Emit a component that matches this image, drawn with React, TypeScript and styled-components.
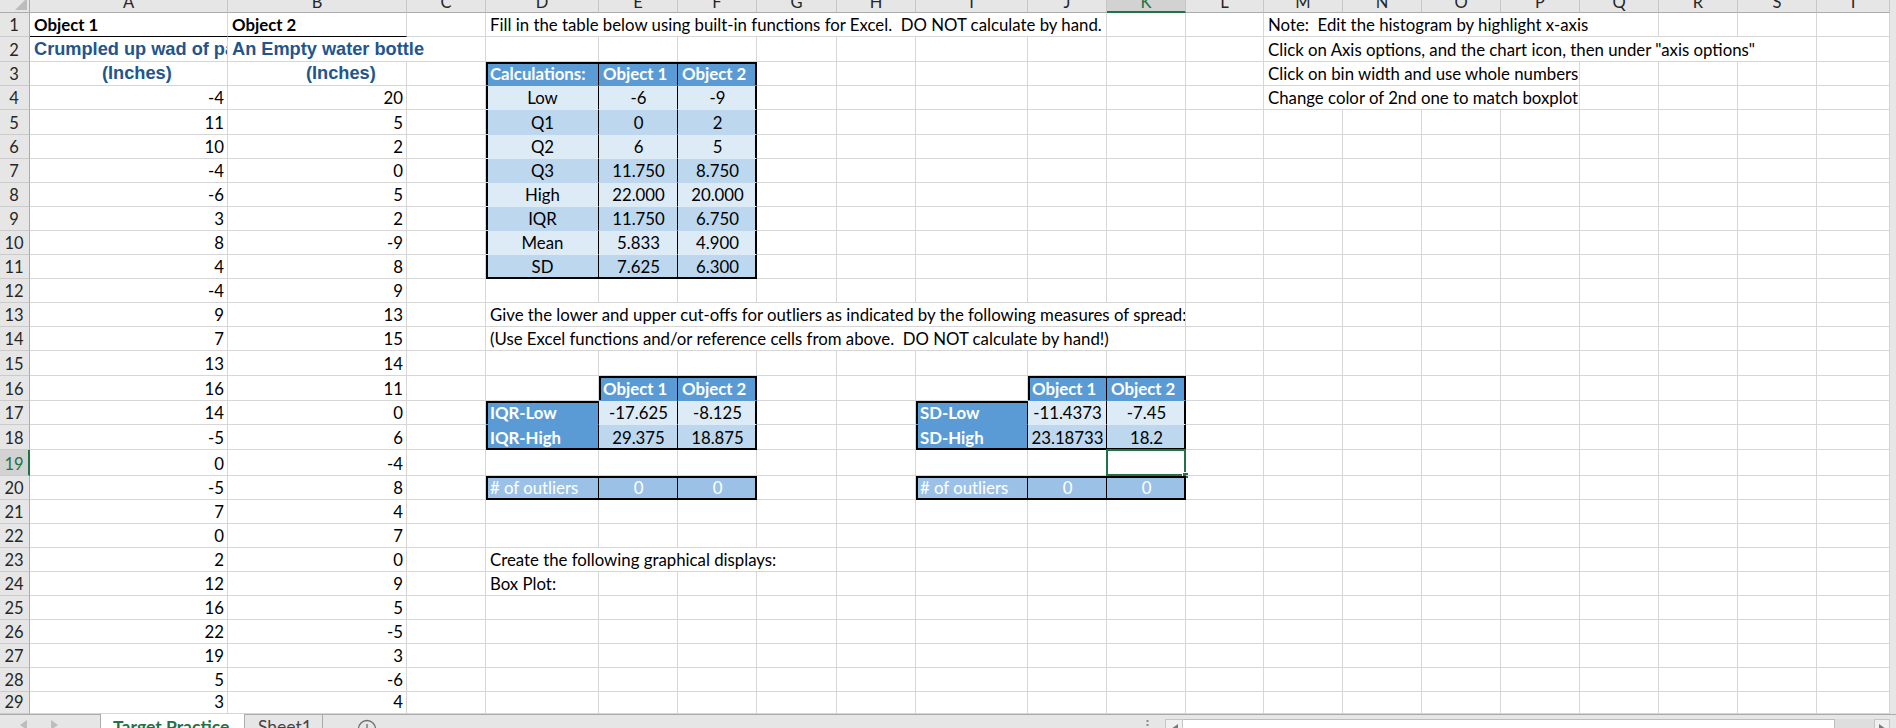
import React from 'react';
import styled, { createGlobalStyle } from 'styled-components';

const FONT = `Lato, "Open Sans", sans-serif`;
const TITLE_FONT = `"Liberation Sans", Arial, sans-serif`;
const GRID = '#d6d6d6';
const HEAD_BG = '#e6e6e6';
const HEAD_SEL = '#d2d2d2';
const HEAD_EDGE = '#ababab';
const GREEN = '#217346';
const BODY_SIZE = 16.8;

const GlobalStyle = createGlobalStyle`
  html, body { margin: 0; padding: 0; }
  body { background: #e6e6e6; font-family: ${FONT}; }
`;

const COLS = ['A','B','C','D','E','F','G','H','I','J','K','L','M','N','O','P','Q','R','S','T'];
const WIDTHS = [198,179,79,113,79,79,80,79,112,79,79,78,79,79,79,79,79,79,79,73];
const HEIGHTS = [24,25,24,24,25,24,24,24,24,24,24,24,24,24,25,25,24,25,26,24,24,24,24,24,24,24,24,24,22];
const SEL_COL = 'K';
const SEL_ROW = 19;

type Tone = 'head' | 'light' | 'dark' | 'outlier';
const TONE_BG: Record<Tone, string> = {
  head: '#5b9bd5',
  light: '#ddebf7',
  dark: '#bdd7ee',
  outlier: '#9bc2e6',
};

interface Spec {
  text?: string;
  span?: number;
  align?: 'left' | 'center' | 'right';
  tone?: Tone;
  bold?: boolean;
  title?: boolean;
  indent?: number;
  t?: number;
  l?: number;
  r?: number;
  b?: number;
  sel?: boolean;
}

const rows: Record<string, Spec>[] = HEIGHTS.map(() => ({}));
const put = (row: number, col: string, spec: Spec) => {
  rows[row - 1][col] = spec;
};

/* ---------- sheet content ---------- */
put(1, 'A', { text: 'Object 1', bold: true, b: 1 });
put(1, 'B', { text: 'Object 2', bold: true, b: 1 });
put(1, 'D', { text: 'Fill in the table below using built-in functions for Excel.  DO NOT calculate by hand.', span: 7 });
put(1, 'M', { text: 'Note:  Edit the histogram by highlight x-axis', span: 5 });
put(2, 'A', { text: 'Crumpled up wad of paper', title: true });
put(2, 'B', { text: 'An Empty water bottle', title: true, span: 2 });
put(2, 'M', { text: 'Click on Axis options, and the chart icon, then under "axis options"', span: 7 });
put(3, 'A', { text: '(Inches)', title: true, indent: 72 });
put(3, 'B', { text: '(Inches)', title: true, indent: 78 });
put(3, 'M', { text: 'Click on bin width and use whole numbers', span: 4 });
put(4, 'M', { text: 'Change color of 2nd one to match boxplot', span: 4 });

const OBJ1 = [-4, 11, 10, -4, -6, 3, 8, 4, -4, 9, 7, 13, 16, 14, -5, 0, -5, 7, 0, 2, 12, 16, 22, 19, 5, 3];
const OBJ2 = [20, 5, 2, 0, 5, 2, -9, 8, 9, 13, 15, 14, 11, 0, 6, -4, 8, 4, 7, 0, 9, 5, -5, 3, -6, 4];
OBJ1.forEach((v, i) => put(4 + i, 'A', { text: String(v), align: 'right' }));
OBJ2.forEach((v, i) => put(4 + i, 'B', { text: String(v), align: 'right' }));

put(3, 'D', { text: 'Calculations:', tone: 'head', t: 2, l: 2, r: 1 });
put(3, 'E', { text: 'Object 1', tone: 'head', t: 2, r: 1 });
put(3, 'F', { text: 'Object 2', tone: 'head', t: 2, r: 2 });
const CALC: [string, string, string][] = [
  ['Low', '-6', '-9'],
  ['Q1', '0', '2'],
  ['Q2', '6', '5'],
  ['Q3', '11.750', '8.750'],
  ['High', '22.000', '20.000'],
  ['IQR', '11.750', '6.750'],
  ['Mean', '5.833', '4.900'],
  ['SD', '7.625', '6.300'],
];
CALC.forEach(([label, e, f], i) => {
  const row = 4 + i;
  const tone: Tone = i % 2 === 0 ? 'light' : 'dark';
  const b = i === CALC.length - 1 ? 2 : undefined;
  put(row, 'D', { text: label, tone, align: 'center', l: 2, r: 1, b });
  put(row, 'E', { text: e, tone, align: 'center', r: 1, b });
  put(row, 'F', { text: f, tone, align: 'center', r: 2, b });
});

put(13, 'D', { text: 'Give the lower and upper cut-offs for outliers as indicated by the following measures of spread:', span: 8 });
put(14, 'D', { text: '(Use Excel functions and/or reference cells from above.  DO NOT calculate by hand!)', span: 8 });

const cutoffTable = (cols: [string, string, string], low: [string, string, string], high: [string, string, string]) => {
  const [c1, c2, c3] = cols;
  put(16, c2, { text: 'Object 1', tone: 'head', t: 2, l: 2, r: 1 });
  put(16, c3, { text: 'Object 2', tone: 'head', t: 2, r: 2 });
  put(17, c1, { text: low[0], tone: 'head', bold: true, t: 2, l: 2, r: 1 });
  put(17, c2, { text: low[1], tone: 'light', align: 'center', r: 1 });
  put(17, c3, { text: low[2], tone: 'light', align: 'center', r: 2 });
  put(18, c1, { text: high[0], tone: 'head', bold: true, l: 2, r: 1, b: 2 });
  put(18, c2, { text: high[1], tone: 'dark', align: 'center', r: 1, b: 2 });
  put(18, c3, { text: high[2], tone: 'dark', align: 'center', r: 2, b: 2 });
  put(20, c1, { text: '# of outliers', tone: 'outlier', t: 2, l: 2, r: 1, b: 2 });
  put(20, c2, { text: '0', tone: 'outlier', align: 'center', t: 2, r: 1, b: 2 });
  put(20, c3, { text: '0', tone: 'outlier', align: 'center', t: 2, r: 2, b: 2 });
};
cutoffTable(['D', 'E', 'F'], ['IQR-Low', '-17.625', '-8.125'], ['IQR-High', '29.375', '18.875']);
cutoffTable(['I', 'J', 'K'], ['SD-Low', '-11.4373', '-7.45'], ['SD-High', '23.18733', '18.2']);
put(19, 'K', { sel: true });

put(23, 'D', { text: 'Create the following graphical displays:', span: 4 });
put(24, 'D', { text: 'Box Plot:' });

/* ---------- styled parts ---------- */
const Sheet = styled.div`
  width: 1896px;
  height: 728px;
  overflow: hidden;
  display: flex;
  flex-direction: column;
  background: ${HEAD_BG};
`;

const Main = styled.div`
  display: flex;
  height: 714px;
  flex: none;
`;

const Grid = styled.div`
  width: 1890px;
  flex: none;
  display: flex;
  flex-direction: column;
  background: #fff;
  overflow: hidden;
`;

const ScrollStub = styled.div`
  flex: 1;
  background: ${HEAD_BG};
`;

const HeaderBand = styled.div`
  display: flex;
  height: 13px;
  flex: none;
`;

const Corner = styled.div`
  width: 30px;
  flex: none;
  box-sizing: border-box;
  background: ${HEAD_BG};
  border-right: 1px solid ${HEAD_EDGE};
  border-bottom: 1px solid ${HEAD_EDGE};
  display: flex;
  justify-content: flex-end;
  align-items: flex-end;
  padding: 0 2px 2px 0;
  overflow: hidden;
`;

const ColHead = styled.div<{ $w: number; $sel?: boolean }>`
  width: ${p => p.$w}px;
  flex: none;
  box-sizing: border-box;
  background: ${p => (p.$sel ? HEAD_SEL : HEAD_BG)};
  border-right: 1px solid #c6c6c6;
  border-bottom: ${p => (p.$sel ? `2px solid ${GREEN}` : `1px solid ${HEAD_EDGE}`)};
  color: ${p => (p.$sel ? GREEN : '#262626')};
  display: flex;
  justify-content: center;
  align-items: flex-end;
  overflow: hidden;
  font-size: 16.5px;
  line-height: 17px;
  padding-bottom: ${p => (p.$sel ? 0 : 1)}px;
`;

const RowLine = styled.div<{ $h: number }>`
  display: flex;
  height: ${p => p.$h}px;
  flex: none;
`;

const RowHead = styled.div<{ $sel?: boolean }>`
  width: 30px;
  flex: none;
  box-sizing: border-box;
  background: ${p => (p.$sel ? HEAD_SEL : HEAD_BG)};
  border-right: ${p => (p.$sel ? `2px solid ${GREEN}` : `1px solid ${HEAD_EDGE}`)};
  border-bottom: 1px solid #cbcbcb;
  color: ${p => (p.$sel ? GREEN : '#262626')};
  display: flex;
  align-items: flex-end;
  justify-content: center;
  font-size: 16.5px;
  line-height: 20px;
  padding: 0 ${p => (p.$sel ? 0 : 1)}px 1px 0;
`;

interface CellProps {
  $w: number;
  $tone?: Tone;
  $align?: 'left' | 'center' | 'right';
  $bold?: boolean;
  $title?: boolean;
  $indent?: number;
  $t?: number;
  $l?: number;
  $r?: number;
  $b?: number;
  $sel?: boolean;
}

const edgeShadow = (p: CellProps) => {
  const list: string[] = [];
  if (p.$t) list.push(`inset 0 ${p.$t}px 0 #000`);
  if (p.$l) list.push(`inset ${p.$l}px 0 0 #000`);
  if (p.$r === 2) list.push('inset -1px 0 0 #000');
  if (p.$b === 2) list.push('inset 0 -1px 0 #000');
  return list.length ? list.join(', ') : 'none';
};

const JUSTIFY = { left: 'flex-start', center: 'center', right: 'flex-end' };

const Cell = styled.div<CellProps>`
  position: relative;
  flex: none;
  box-sizing: border-box;
  width: ${p => p.$w}px;
  background: ${p => (p.$tone ? TONE_BG[p.$tone] : 'transparent')};
  border-right: 1px solid ${p => (p.$r ? '#000' : p.$tone ? 'transparent' : GRID)};
  border-bottom: 1px solid ${p => (p.$b ? '#000' : p.$tone ? 'transparent' : GRID)};
  box-shadow: ${edgeShadow};
  display: flex;
  align-items: flex-end;
  justify-content: ${p => JUSTIFY[p.$align ?? 'left']};
  padding: 0 3px ${p => (p.$title ? 2 : 1)}px ${p => p.$indent ?? 4}px;
  overflow: ${p => (p.$sel ? 'visible' : 'hidden')};
  white-space: pre;
  font-family: ${p => (p.$title ? TITLE_FONT : FONT)};
  font-size: ${p => (p.$title ? 18.2 : BODY_SIZE)}px;
  font-weight: ${p => (p.$bold || p.$title || p.$tone === 'head' ? 700 : 400)};
  color: ${p => (p.$title ? '#23558c' : p.$tone === 'head' || p.$tone === 'outlier' ? '#fff' : '#000')};
  line-height: 20px;
`;

const SelectionBox = styled.div`
  position: absolute;
  top: -1px;
  left: -1px;
  right: -1px;
  bottom: -1px;
  border: 2px solid ${GREEN};
  pointer-events: none;
`;

const FillHandle = styled.div`
  position: absolute;
  right: -5px;
  bottom: -5px;
  width: 5px;
  height: 5px;
  background: ${GREEN};
  border: 1px solid #fff;
`;

/* ---------- bottom bar ---------- */
const TabBar = styled.div`
  height: 14px;
  flex: none;
  box-sizing: border-box;
  display: flex;
  align-items: flex-start;
  background: ${HEAD_BG};
  border-top: 1px solid ${HEAD_EDGE};
`;

const NavArrows = styled.div`
  width: 100px;
  flex: none;
  display: flex;
  gap: 24px;
  padding: 5px 0 0 20px;
  box-sizing: border-box;
`;

const SheetTab = styled.div<{ $w: number; $active?: boolean }>`
  width: ${p => p.$w}px;
  flex: none;
  box-sizing: border-box;
  height: ${p => (p.$active ? 14 : 13)}px;
  margin-top: ${p => (p.$active ? -1 : 0)}px;
  padding: ${p => (p.$active ? 4 : 3)}px 0 0 ${p => (p.$active ? 12 : 13)}px;
  background: ${p => (p.$active ? '#fff' : 'transparent')};
  border-left: ${p => (p.$active ? `1px solid ${HEAD_EDGE}` : 'none')};
  border-right: 1px solid ${HEAD_EDGE};
  font-size: 17.5px;
  line-height: 17px;
  font-weight: ${p => (p.$active ? 700 : 400)};
  color: ${p => (p.$active ? GREEN : '#444')};
  white-space: nowrap;
  overflow: hidden;
`;

const AddSheet = styled.div`
  margin: 4px 0 0 34px;
  flex: none;
  display: flex;
`;

const Spacer = styled.div`
  flex: 1;
`;

const Splitter = styled.div`
  flex: none;
  margin: 5px 16px 0 0;
  display: flex;
`;

const HScroll = styled.div`
  width: 725px;
  flex: none;
  margin-top: 4px;
  height: 14px;
  display: flex;
`;

const ScrollBtn = styled.div<{ $w: number }>`
  width: ${p => p.$w}px;
  flex: none;
  box-sizing: border-box;
  border: 1px solid #c6c6c6;
  background: #f0f0f0;
  display: flex;
  justify-content: center;
  padding-top: 4px;
`;

const Thumb = styled.div`
  width: 652px;
  flex: none;
  box-sizing: border-box;
  border: 1px solid #bdbdbd;
  border-left: none;
  background: #fff;
`;

const Track = styled.div`
  flex: 1;
  background: #dedede;
`;

const BarEnd = styled.div`
  width: 6px;
  flex: none;
`;

/* ---------- components ---------- */
const Triangle = ({ dir, color = '#bdbdbd' }: { dir: 'left' | 'right'; color?: string }) => (
  <svg width="7" height="10" viewBox="0 0 7 10">
    <polygon points={dir === 'left' ? '7,0 7,10 0,5' : '0,0 0,10 7,5'} fill={color} />
  </svg>
);

const SheetRow = ({ index }: { index: number }) => {
  const specs = rows[index];
  const rowNum = index + 1;
  const cells: React.ReactNode[] = [];
  for (let c = 0; c < COLS.length; ) {
    const s = specs[COLS[c]];
    const span = s?.span ?? 1;
    const w = WIDTHS.slice(c, c + span).reduce((a, b) => a + b, 0);
    cells.push(
      <Cell
        key={COLS[c]}
        $w={w}
        $tone={s?.tone}
        $align={s?.align}
        $bold={s?.bold}
        $title={s?.title}
        $indent={s?.indent}
        $t={s?.t}
        $l={s?.l}
        $r={s?.r}
        $b={s?.b}
        $sel={s?.sel}
      >
        {s?.text}
        {s?.sel && (
          <SelectionBox>
            <FillHandle />
          </SelectionBox>
        )}
      </Cell>
    );
    c += span;
  }
  return (
    <RowLine $h={HEIGHTS[index]}>
      <RowHead $sel={rowNum === SEL_ROW}>{rowNum}</RowHead>
      {cells}
    </RowLine>
  );
};

export default function App() {
  return (
    <>
      <GlobalStyle />
      <Sheet>
        <Main>
          <Grid>
            <HeaderBand>
              <Corner>
                <svg width="12" height="10" viewBox="0 0 12 10">
                  <polygon points="0,10 12,10 12,-2" fill="#bcbcbc" />
                </svg>
              </Corner>
              {COLS.map((c, i) => (
                <ColHead key={c} $w={WIDTHS[i]} $sel={c === SEL_COL}>
                  {c}
                </ColHead>
              ))}
            </HeaderBand>
            {HEIGHTS.map((_, i) => (
              <SheetRow key={i} index={i} />
            ))}
          </Grid>
          <ScrollStub />
        </Main>
        <TabBar>
          <NavArrows>
            <Triangle dir="left" />
            <Triangle dir="right" />
          </NavArrows>
          <SheetTab $w={145} $active>
            Target Practice
          </SheetTab>
          <SheetTab $w={78}>Sheet1</SheetTab>
          <AddSheet>
            <svg width="20" height="20" viewBox="0 0 20 20">
              <circle cx="10" cy="10" r="8.5" fill="none" stroke="#6d6d6d" strokeWidth="1.3" />
              <line x1="10" y1="5" x2="10" y2="15" stroke="#6d6d6d" strokeWidth="1.3" />
              <line x1="5" y1="10" x2="15" y2="10" stroke="#6d6d6d" strokeWidth="1.3" />
            </svg>
          </AddSheet>
          <Spacer />
          <Splitter>
            <svg width="3" height="12" viewBox="0 0 3 12">
              <rect x="0.5" y="0" width="2" height="2" fill="#8a8a8a" />
              <rect x="0.5" y="4" width="2" height="2" fill="#8a8a8a" />
              <rect x="0.5" y="8" width="2" height="2" fill="#8a8a8a" />
            </svg>
          </Splitter>
          <HScroll>
            <ScrollBtn $w={18}>
              <Triangle dir="left" color="#7a7a7a" />
            </ScrollBtn>
            <Thumb />
            <Track />
            <ScrollBtn $w={16}>
              <Triangle dir="right" color="#7a7a7a" />
            </ScrollBtn>
          </HScroll>
          <BarEnd />
        </TabBar>
      </Sheet>
    </>
  );
}
